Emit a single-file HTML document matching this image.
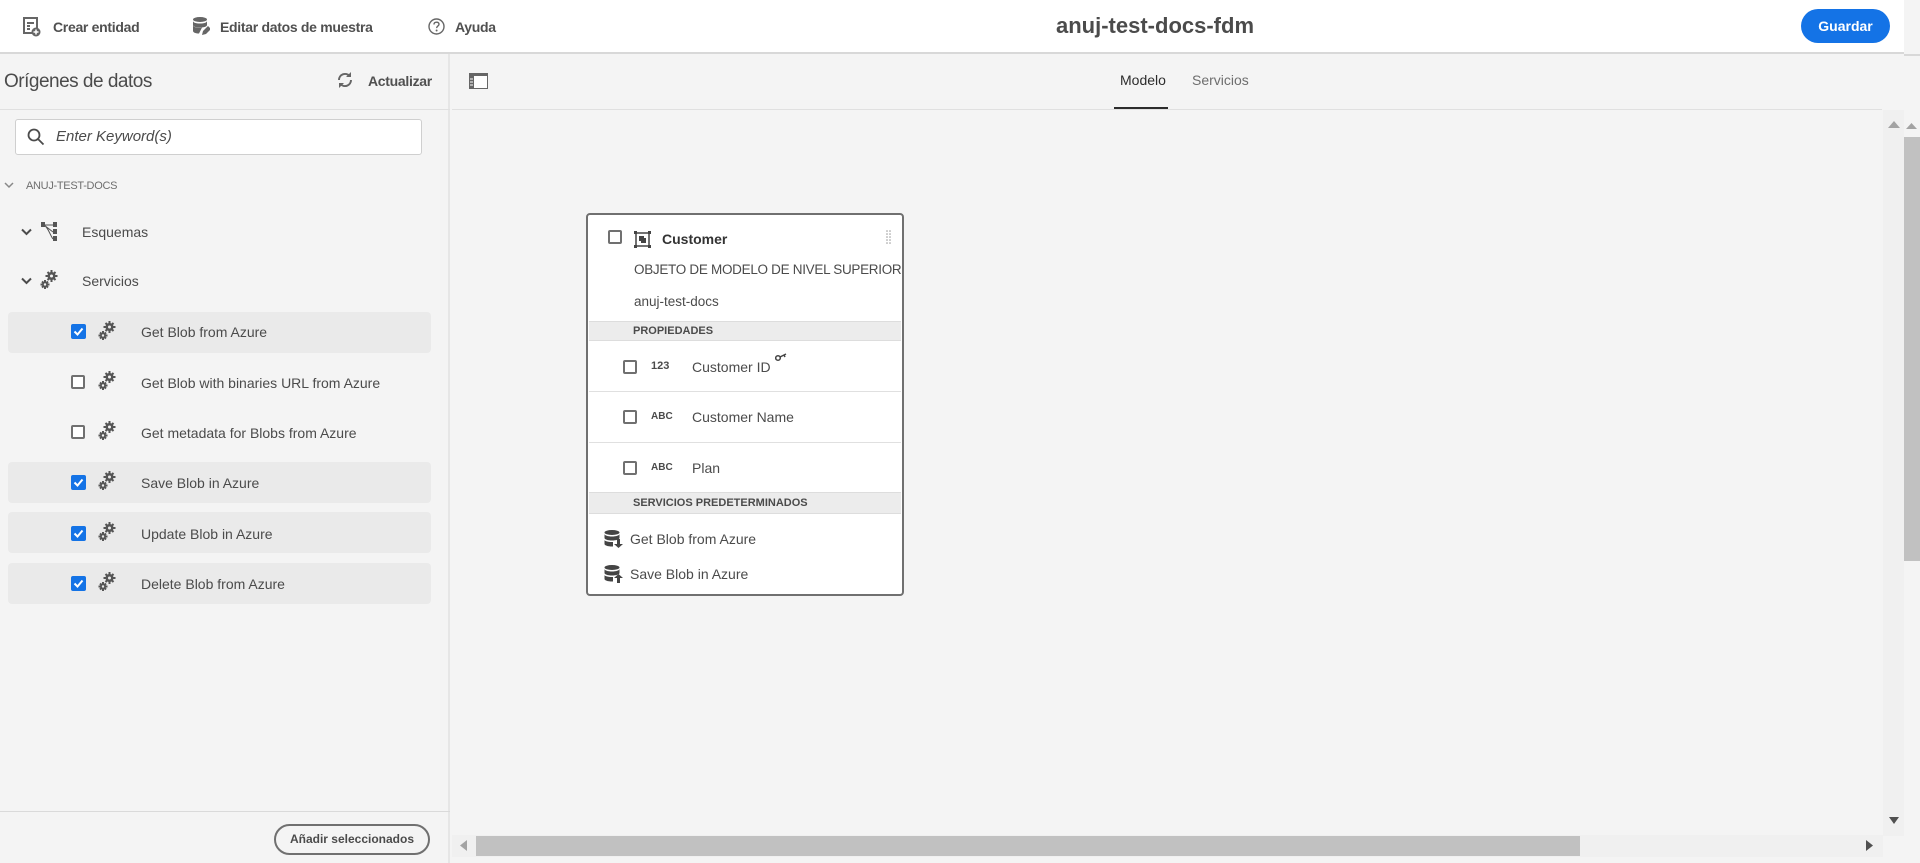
<!DOCTYPE html>
<html><head><meta charset="utf-8"><style>
*{box-sizing:border-box;margin:0;padding:0}
body{width:1920px;height:863px;overflow:hidden;background:#f4f4f4;font-family:"Liberation Sans",sans-serif;color:#4b4b4b;position:relative}
.abs{position:absolute}
.top{left:0;top:0;width:1904px;height:54px;background:#fff;border-bottom:2px solid #d8d8d8}
.tb{font-size:14px;font-weight:bold;color:#505050;top:19px;letter-spacing:-0.3px}
.left{left:0;top:54px;width:450px;height:809px;background:#f4f4f4;border-right:2px solid #e6e6e6}
.cb{width:14px;height:14px;border:2px solid #707070;border-radius:2px;background:#fff}
.cbc{width:15px;height:15px;border-radius:2px;background:#1473e6}
.row{left:8px;width:423px;height:41px;border-radius:4px}
.rt{font-size:14px;color:#4b4b4b}
.card{left:586px;top:213px;width:318px;height:383px;background:#fff;border:2px solid #707070;border-radius:4px}
.band{left:1px;width:312px;height:20px;background:#ececec;border-top:1px solid #ddd;border-bottom:1px solid #ddd;font-size:11px;font-weight:bold;padding-left:44px;line-height:18px}
.ct{font-size:14px;color:#4b4b4b}
</style></head><body>
<div class="abs top"></div>
<!-- toolbar -->
<svg class="abs" style="left:23px;top:17px" width="18" height="20" viewBox="0 0 18 20"><rect x="1" y="1" width="13" height="15" fill="none" stroke="#666" stroke-width="2"/><path d="M4 6h7M4 9h3M4 12h3" stroke="#666" stroke-width="2"/><circle cx="13" cy="15" r="4.5" fill="#666"/><path d="M13 12.5v5M10.5 15h5" stroke="#fff" stroke-width="1.5"/></svg>
<div class="abs tb" style="left:53px">Crear entidad</div>
<svg class="abs" style="left:192px;top:16px" width="18" height="20" viewBox="0 0 18 20"><ellipse cx="8" cy="3.5" rx="7" ry="2.5" fill="#666"/><path d="M1 5v4c0 1.5 3 2.5 7 2.5s7-1 7-2.5V5c0 1.5-3 2.5-7 2.5S1 6.5 1 5zM1 11v4c0 1.5 3 2.5 6 2.5l3-6c-1 .3-1.5.3-2 .3-4 0-7-1-7-2.5z" fill="#666"/><path d="M10 19l1-4 5-5 3 3-5 5z" fill="#666"/></svg>
<div class="abs tb" style="left:220px">Editar datos de muestra</div>
<svg class="abs" style="left:428px;top:18px" width="17" height="17" viewBox="0 0 17 17"><circle cx="8.5" cy="8.5" r="7.5" fill="none" stroke="#666" stroke-width="1.4"/><path d="M6 6.5c0-1.5 1-2.3 2.5-2.3S11 5 11 6.3c0 1.8-2.4 1.8-2.4 3.8" fill="none" stroke="#666" stroke-width="1.4"/><circle cx="8.6" cy="12.5" r="1" fill="#666"/></svg>
<div class="abs tb" style="left:455px">Ayuda</div>
<div class="abs" style="left:0;width:2310px;top:13px;text-align:center;font-size:22px;font-weight:bold;color:#4b4b4b">anuj-test-docs-fdm</div>
<div class="abs" style="left:1801px;top:9px;width:89px;height:34px;border-radius:17px;background:#1473e6;color:#fff;font-weight:bold;font-size:14px;text-align:center;line-height:34px">Guardar</div>

<!-- left panel -->
<div class="abs left"></div>
<div class="abs" style="left:0;top:109px;width:450px;height:1px;background:#e0e0e0"></div>
<div class="abs" style="left:4px;top:71px;font-size:19px;color:#4b4b4b;letter-spacing:-0.5px">Orígenes de datos</div>
<svg class="abs" style="left:336px;top:71px" width="18" height="18" viewBox="0 0 18 18"><path d="M3 9a6 6 0 0 1 10.5-4M15 9a6 6 0 0 1-10.5 4" fill="none" stroke="#666" stroke-width="2"/><path d="M15 1v5h-5zM3 17v-5h5z" fill="#666"/></svg>
<div class="abs tb" style="left:368px;top:73px">Actualizar</div>
<div class="abs" style="left:15px;top:119px;width:407px;height:36px;background:#fff;border:1px solid #cfcfcf;border-radius:3px"></div>
<svg class="abs" style="left:27px;top:128px" width="18" height="18" viewBox="0 0 18 18"><circle cx="7" cy="7" r="5.5" fill="none" stroke="#4b4b4b" stroke-width="1.8"/><path d="M11 11l5.5 5.5" stroke="#4b4b4b" stroke-width="1.8"/></svg>
<div class="abs" style="left:56px;top:128px;font-size:15px;font-style:italic;color:#4b4b4b">Enter Keyword(s)</div>
<svg class="abs" style="left:4px;top:182px" width="10" height="8"><path d="M1 1l4 4 4-4" fill="none" stroke="#888" stroke-width="1.5"/></svg>
<div class="abs" style="left:26px;top:180px;font-size:11px;color:#6e6e6e;letter-spacing:-0.3px">ANUJ-TEST-DOCS</div>
<svg class="abs" style="left:21px;top:228px" width="11" height="9"><path d="M1 1.5l4.5 4.5 4.5-4.5" fill="none" stroke="#4b4b4b" stroke-width="2"/></svg>
<svg class="abs" style="left:41px;top:222px" width="17" height="20" viewBox="0 0 17 20"><rect x="0" y="0" width="4" height="5" fill="#555"/><rect x="12" y="0" width="4" height="5" fill="#555"/><rect x="12" y="7" width="4" height="5" fill="#555"/><rect x="12" y="14" width="4" height="5" fill="#555"/><path d="M3 3l9 0M3 3l9 7M3 3c4 2 6 10 9 14" fill="none" stroke="#555" stroke-width="1"/></svg>
<div class="abs rt" style="left:82px;top:224px">Esquemas</div>
<svg class="abs" style="left:21px;top:277px" width="11" height="9"><path d="M1 1.5l4.5 4.5 4.5-4.5" fill="none" stroke="#4b4b4b" stroke-width="2"/></svg>
<svg class="abs" style="left:40px;top:270px" width="18" height="20" viewBox="0 0 18 20"><g fill="#555"><circle cx="11.5" cy="6" r="4"/><circle cx="5" cy="14.5" r="3"/></g><g stroke="#555" stroke-width="2"><path d="M11.5 0v12M5.5 6h12M7.5 2l8 8M15.5 2l-8 8M5 10v9M0.5 14.5h9M2 11.5l6 6M8 11.5l-6 6"/></g><circle cx="11.5" cy="6" r="1.5" fill="#f4f4f4"/><circle cx="5" cy="14.5" r="1.2" fill="#f4f4f4"/></svg>
<div class="abs rt" style="left:82px;top:273px">Servicios</div>

<div class="abs row" style="top:312px;background:#eaeaea"></div>
<div class="abs row" style="top:462px;background:#eaeaea"></div>
<div class="abs row" style="top:512px;background:#eaeaea"></div>
<div class="abs row" style="top:563px;background:#eaeaea"></div>

<div class="abs cbc" style="left:71px;top:324px"><svg width="15" height="15"><path d="M3.5 7.5l3 3 5-6" fill="none" stroke="#fff" stroke-width="2"/></svg></div>
<div class="abs cb" style="left:71px;top:375px"></div>
<div class="abs cb" style="left:71px;top:425px"></div>
<div class="abs cbc" style="left:71px;top:475px"><svg width="15" height="15"><path d="M3.5 7.5l3 3 5-6" fill="none" stroke="#fff" stroke-width="2"/></svg></div>
<div class="abs cbc" style="left:71px;top:526px"><svg width="15" height="15"><path d="M3.5 7.5l3 3 5-6" fill="none" stroke="#fff" stroke-width="2"/></svg></div>
<div class="abs cbc" style="left:71px;top:576px"><svg width="15" height="15"><path d="M3.5 7.5l3 3 5-6" fill="none" stroke="#fff" stroke-width="2"/></svg></div>

<svg width="0" height="0" style="position:absolute"><defs><g id="gear"><g fill="#555"><circle cx="11.5" cy="6" r="4"/><circle cx="5" cy="14.5" r="3"/></g><g stroke="#555" stroke-width="2"><path d="M11.5 0v12M5.5 6h12M7.5 2l8 8M15.5 2l-8 8M5 10v9M0.5 14.5h9M2 11.5l6 6M8 11.5l-6 6"/></g></g></defs></svg>
<svg class="abs" style="left:98px;top:321px" width="18" height="20"><use href="#gear"/><circle cx="11.5" cy="6" r="1.5" fill="#eaeaea"/><circle cx="5" cy="14.5" r="1.2" fill="#eaeaea"/></svg>
<svg class="abs" style="left:98px;top:371px" width="18" height="20"><use href="#gear"/><circle cx="11.5" cy="6" r="1.5" fill="#f4f4f4"/><circle cx="5" cy="14.5" r="1.2" fill="#f4f4f4"/></svg>
<svg class="abs" style="left:98px;top:421px" width="18" height="20"><use href="#gear"/><circle cx="11.5" cy="6" r="1.5" fill="#f4f4f4"/><circle cx="5" cy="14.5" r="1.2" fill="#f4f4f4"/></svg>
<svg class="abs" style="left:98px;top:471px" width="18" height="20"><use href="#gear"/><circle cx="11.5" cy="6" r="1.5" fill="#eaeaea"/><circle cx="5" cy="14.5" r="1.2" fill="#eaeaea"/></svg>
<svg class="abs" style="left:98px;top:522px" width="18" height="20"><use href="#gear"/><circle cx="11.5" cy="6" r="1.5" fill="#eaeaea"/><circle cx="5" cy="14.5" r="1.2" fill="#eaeaea"/></svg>
<svg class="abs" style="left:98px;top:572px" width="18" height="20"><use href="#gear"/><circle cx="11.5" cy="6" r="1.5" fill="#eaeaea"/><circle cx="5" cy="14.5" r="1.2" fill="#eaeaea"/></svg>

<div class="abs rt" style="left:141px;top:324px">Get Blob from Azure</div>
<div class="abs rt" style="left:141px;top:375px">Get Blob with binaries URL from Azure</div>
<div class="abs rt" style="left:141px;top:425px">Get metadata for Blobs from Azure</div>
<div class="abs rt" style="left:141px;top:475px">Save Blob in Azure</div>
<div class="abs rt" style="left:141px;top:526px">Update Blob in Azure</div>
<div class="abs rt" style="left:141px;top:576px">Delete Blob from Azure</div>

<div class="abs" style="left:0;top:811px;width:450px;height:1px;background:#dadada"></div>
<div class="abs" style="left:274px;top:824px;width:156px;height:31px;border:2px solid #707070;border-radius:16px;font-size:12px;font-weight:bold;text-align:center;line-height:27px;color:#4b4b4b">Añadir seleccionados</div>

<!-- right header -->
<div class="abs" style="left:452px;top:109px;width:1430px;height:1px;background:#e0e0e0"></div>
<svg class="abs" style="left:469px;top:73px" width="19" height="16"><rect x="0.5" y="0.5" width="18" height="15" fill="#fff" stroke="#666"/><rect x="0" y="0" width="19" height="3" fill="#666"/><rect x="0" y="0" width="5" height="16" fill="#666"/><path d="M1 6h3M1 9h3M1 12h3" stroke="#fff"/></svg>
<div class="abs" style="left:1120px;top:72px;font-size:14px;color:#2c2c2c">Modelo</div>
<div class="abs" style="left:1114px;top:107px;width:54px;height:2px;background:#2c2c2c"></div>
<div class="abs" style="left:1192px;top:72px;font-size:14px;color:#6e6e6e">Servicios</div>

<!-- card -->
<div class="abs card">
 <div class="abs cb" style="left:20px;top:15px"></div>
 <svg class="abs" style="left:46px;top:16px" width="17" height="17"><rect x="2" y="2" width="13" height="13" fill="none" stroke="#444" stroke-width="1.5"/><rect x="0" y="0" width="3" height="3" fill="#444"/><rect x="14" y="0" width="3" height="3" fill="#444"/><rect x="0" y="14" width="3" height="3" fill="#444"/><rect x="14" y="14" width="3" height="3" fill="#444"/><rect x="5" y="5" width="5" height="5" fill="#444"/><rect x="7" y="7" width="5" height="5" fill="#444"/></svg>
 <div class="abs" style="left:74px;top:16px;font-size:14px;font-weight:bold;color:#333">Customer</div>
 <svg class="abs" style="left:298px;top:15px" width="6" height="16"><g fill="#999"><circle cx="1" cy="1" r=".8"/><circle cx="4" cy="1" r=".8"/><circle cx="1" cy="4" r=".8"/><circle cx="4" cy="4" r=".8"/><circle cx="1" cy="7" r=".8"/><circle cx="4" cy="7" r=".8"/><circle cx="1" cy="10" r=".8"/><circle cx="4" cy="10" r=".8"/><circle cx="1" cy="13" r=".8"/><circle cx="4" cy="13" r=".8"/></g></svg>
 <div class="abs ct" style="left:46px;top:47px;font-size:13.5px;white-space:nowrap;letter-spacing:-0.3px">OBJETO DE MODELO DE NIVEL SUPERIOR</div>
 <div class="abs ct" style="left:46px;top:79px;font-size:13.5px">anuj-test-docs</div>
 <div class="abs band" style="top:106px">PROPIEDADES</div>
 <div class="abs cb" style="left:35px;top:145px"></div>
 <div class="abs" style="left:63px;top:145px;font-size:11px;font-weight:bold">123</div>
 <div class="abs ct" style="left:104px;top:144px">Customer ID</div>
 <svg class="abs" style="left:187px;top:138px" width="12" height="9"><circle cx="3" cy="5" r="2.3" fill="none" stroke="#444" stroke-width="1.5"/><path d="M5 4l6-3M9 2l1 2" stroke="#444" stroke-width="1.5"/></svg>
 <div class="abs" style="left:1px;top:176px;width:312px;height:1px;background:#e0e0e0"></div>
 <div class="abs cb" style="left:35px;top:195px"></div>
 <div class="abs" style="left:63px;top:196px;font-size:10px;font-weight:bold">ABC</div>
 <div class="abs ct" style="left:104px;top:194px">Customer Name</div>
 <div class="abs" style="left:1px;top:227px;width:312px;height:1px;background:#e0e0e0"></div>
 <div class="abs cb" style="left:35px;top:246px"></div>
 <div class="abs" style="left:63px;top:247px;font-size:10px;font-weight:bold">ABC</div>
 <div class="abs ct" style="left:104px;top:245px">Plan</div>
 <div class="abs band" style="top:277px;height:22px;line-height:20px">SERVICIOS PREDETERMINADOS</div>
 <svg class="abs" style="left:16px;top:315px" width="19" height="18"><ellipse cx="8" cy="2.5" rx="7.5" ry="2.5" fill="#444"/><path d="M.5 4v4c0 1.4 3.4 2.5 7.5 2.5s7.5-1.1 7.5-2.5V4c0 1.4-3.4 2.5-7.5 2.5S.5 5.4.5 4zM.5 10v4c0 1.4 3.4 2.5 7.5 2.5h1V12H8c-4.1 0-7.5-1.1-7.5-2z" fill="#444"/><path d="M13 9v5h-3l4.5 4 4.5-4h-3V9z" fill="#444"/></svg>
 <div class="abs ct" style="left:42px;top:316px">Get Blob from Azure</div>
 <svg class="abs" style="left:16px;top:350px" width="19" height="18"><ellipse cx="8" cy="2.5" rx="7.5" ry="2.5" fill="#444"/><path d="M.5 4v4c0 1.4 3.4 2.5 7.5 2.5s7.5-1.1 7.5-2.5V4c0 1.4-3.4 2.5-7.5 2.5S.5 5.4.5 4zM.5 10v4c0 1.4 3.4 2.5 7.5 2.5h1V12H8c-4.1 0-7.5-1.1-7.5-2z" fill="#444"/><path d="M13 18v-5h-3l4.5-4 4.5 4h-3v5z" fill="#444"/></svg>
 <div class="abs ct" style="left:42px;top:351px">Save Blob in Azure</div>
</div>

<!-- scrollbars -->
<div class="abs" style="left:1883px;top:110px;width:21px;height:726px;background:#f0f0f0"></div>
<svg class="abs" style="left:1888px;top:120px" width="12" height="8"><path d="M0 8L6 1l6 7z" fill="#a3a3a3"/></svg>
<div class="abs" style="left:1904px;top:54px;width:16px;height:809px;background:#f4f4f4"></div>
<div class="abs" style="left:1904px;top:54px;width:16px;height:2px;background:#d8d8d8"></div>
<svg class="abs" style="left:1906px;top:122px" width="11" height="7"><path d="M0 7L5.5 1 11 7z" fill="#a3a3a3"/></svg>
<div class="abs" style="left:1904px;top:137px;width:16px;height:424px;background:#c1c1c1"></div>
<svg class="abs" style="left:1889px;top:817px" width="10" height="7"><path d="M0 0h10L5 7z" fill="#505050"/></svg>
<div class="abs" style="left:452px;top:835px;width:1431px;height:22px;background:#f0f0f0"></div>
<svg class="abs" style="left:460px;top:840px" width="7" height="11"><path d="M7 0v11L0 5.5z" fill="#a3a3a3"/></svg>
<div class="abs" style="left:476px;top:836px;width:1104px;height:20px;background:#c1c1c1"></div>
<svg class="abs" style="left:1866px;top:840px" width="7" height="11"><path d="M0 0v11l7-5.5z" fill="#505050"/></svg>
</body></html>
